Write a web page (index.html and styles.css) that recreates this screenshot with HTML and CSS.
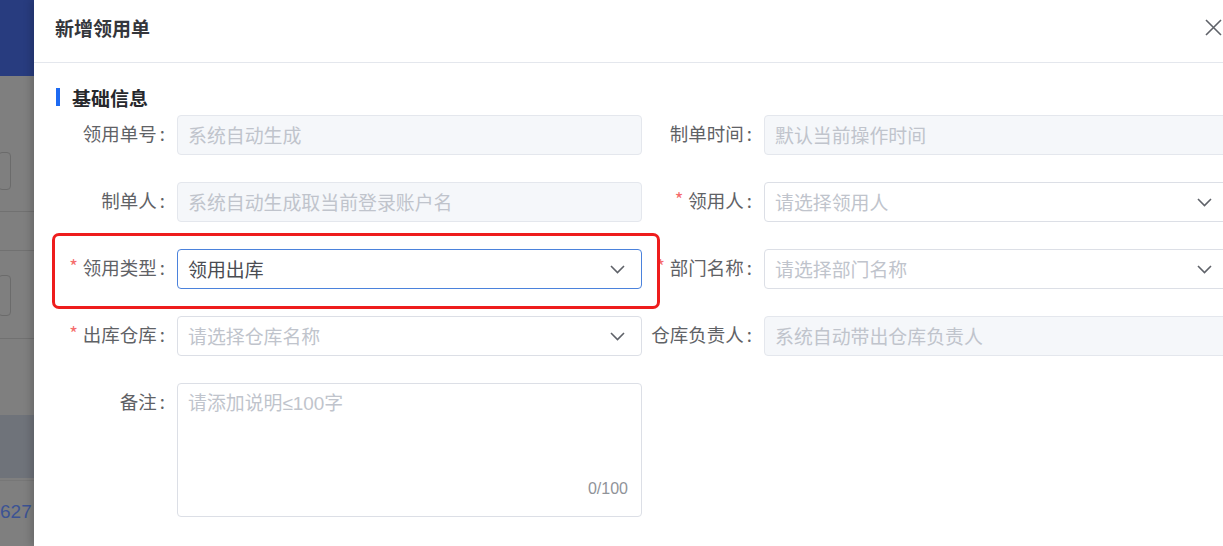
FILE: index.html
```html
<!DOCTYPE html>
<html lang="zh-CN">
<head>
<meta charset="utf-8">
<title>新增领用单</title>
<link rel="stylesheet" href="styles.css">
</head>
<body>
  <div class="backdrop">
    <div class="bd-header"></div>
    <div class="bd-input bd-input-1"></div>
    <div class="bd-line bd-line-1"></div>
    <div class="bd-line bd-line-2"></div>
    <div class="bd-input bd-input-2"></div>
    <div class="bd-line bd-line-3"></div>
    <div class="bd-band"></div>
    <div class="bd-line bd-line-4"></div>
    <div class="bd-text">627</div>
  </div>

  <div class="drawer">
    <div class="drawer-header">
      <div class="drawer-title">新增领用单</div>
      <svg class="close" width="17" height="17" viewBox="0 0 17 17">
        <path d="M1 1 L16 16 M16 1 L1 16" stroke="#5f6269" stroke-width="1.6" fill="none"/>
      </svg>
    </div>
    <div class="drawer-body">
      <div class="section-title"><span class="bar"></span><span>基础信息</span></div>
      <div class="form">
        <div class="item">
          <label class="label">领用单号<span class="colon">:</span></label>
          <div class="input is-disabled"><span class="text">系统自动生成</span></div>
        </div>
        <div class="item">
          <label class="label">制单时间<span class="colon">:</span></label>
          <div class="input is-disabled"><span class="text">默认当前操作时间</span></div>
        </div>

        <div class="item">
          <label class="label">制单人<span class="colon">:</span></label>
          <div class="input is-disabled"><span class="text">系统自动生成取当前登录账户名</span></div>
        </div>
        <div class="item">
          <label class="label"><span class="req">*</span>领用人<span class="colon">:</span></label>
          <div class="input"><span class="text placeholder">请选择领用人</span><svg class="arrow" width="15" height="9" viewBox="0 0 15 9"><path d="M1 1 L7.5 7.5 L14 1" stroke="#5f6269" stroke-width="1.6" fill="none"/></svg></div>
        </div>

        <div class="item">
          <label class="label"><span class="req">*</span>领用类型<span class="colon">:</span></label>
          <div class="input is-focus"><span class="text">领用出库</span><svg class="arrow" width="15" height="9" viewBox="0 0 15 9"><path d="M1 1 L7.5 7.5 L14 1" stroke="#5f6269" stroke-width="1.6" fill="none"/></svg></div>
        </div>
        <div class="item">
          <label class="label"><span class="req">*</span>部门名称<span class="colon">:</span></label>
          <div class="input"><span class="text placeholder">请选择部门名称</span><svg class="arrow" width="15" height="9" viewBox="0 0 15 9"><path d="M1 1 L7.5 7.5 L14 1" stroke="#5f6269" stroke-width="1.6" fill="none"/></svg></div>
        </div>

        <div class="item">
          <label class="label"><span class="req">*</span>出库仓库<span class="colon">:</span></label>
          <div class="input"><span class="text placeholder">请选择仓库名称</span><svg class="arrow" width="15" height="9" viewBox="0 0 15 9"><path d="M1 1 L7.5 7.5 L14 1" stroke="#5f6269" stroke-width="1.6" fill="none"/></svg></div>
        </div>
        <div class="item">
          <label class="label">仓库负责人<span class="colon">:</span></label>
          <div class="input is-disabled"><span class="text">系统自动带出仓库负责人</span></div>
        </div>

        <div class="item">
          <label class="label">备注<span class="colon">:</span></label>
          <div class="textarea">
            <span class="placeholder">请添加说明<span class="latin">≤100</span>字</span>
            <span class="count">0/100</span>
          </div>
        </div>
        <div class="item"></div>
      </div>
    </div>
  </div>

  <div class="annotation"></div>
</body>
</html>
```

FILE: styles.css
```css
* {
  box-sizing: border-box;
}

html, body {
  margin: 0;
  padding: 0;
}

body {
  width: 1223px;
  height: 546px;
  overflow: hidden;
  display: flex;
  position: relative;
  font-family: "Noto Sans CJK SC", "Noto Sans", "Liberation Sans", sans-serif;
  background: #7e7e7e;
}

/* masked page behind the drawer */
.backdrop {
  width: 34px;
  flex: none;
  height: 546px;
  overflow: hidden;
  background: #7f7f7f;
}

.bd-header {
  height: 76px;
  background: #283c7f;
}

.bd-input {
  width: 13px;
  margin-left: -2px;
  border: 1px solid #6b6b6b;
  border-radius: 4px;
}

.bd-input-1 {
  margin-top: 76px;
  height: 38px;
}

.bd-input-2 {
  margin-top: 24px;
  height: 41px;
}

.bd-line {
  height: 1px;
  background: #717171;
}

.bd-line-1 {
  margin-top: 21px;
}

.bd-line-2 {
  margin-top: 38px;
}

.bd-line-3 {
  margin-top: 22px;
}

.bd-band {
  margin-top: 76px;
  height: 63px;
  background: #6f737a;
}

.bd-line-4 {
  margin-top: 2px;
  background: #777;
}

.bd-text {
  margin-top: 20px;
  font-family: "Liberation Sans", sans-serif;
  font-size: 19px;
  line-height: 22px;
  color: #3c5394;
  white-space: nowrap;
}

/* drawer */
.drawer {
  flex: 1;
  min-width: 0;
  height: 546px;
  background: #fff;
  overflow: hidden;
  box-shadow: -3px 0 8px rgba(0, 0, 0, 0.18);
}

.drawer-header {
  height: 63px;
  border-bottom: 1px solid #e4e7ed;
  display: flex;
  justify-content: space-between;
  align-items: flex-start;
  padding: 17px 1px 0 21px;
}

.drawer-title {
  font-size: 19px;
  line-height: 22px;
  font-weight: 700;
  color: #34363b;
}

.close {
  margin-top: 2px;
}

.drawer-body {
  padding: 22px 0 0 21px;
}

.section-title {
  display: flex;
  align-items: center;
  height: 24px;
  font-size: 19px;
  font-weight: 700;
  color: #26282c;
}

.bar {
  width: 4px;
  height: 18px;
  margin-left: 1px;
  margin-right: 12px;
  background: #1d6af2;
}

.form {
  margin-top: 6px;
  width: 1174px;
  display: grid;
  grid-template-columns: 587px 587px;
  row-gap: 27px;
}

.item {
  display: flex;
  align-items: flex-start;
}

.label {
  width: 122px;
  flex: none;
  text-align: right;
  padding-right: 12px;
  line-height: 37px;
  font-size: 18.5px;
  color: #5f6266;
  white-space: nowrap;
}

.colon {
  margin-left: 3px;
}

.req {
  color: #f56c6c;
  margin-right: 5px;
  position: relative;
  top: -1px;
}

.input {
  width: 465px;
  flex: none;
  height: 40px;
  border: 1px solid #dcdfe6;
  border-radius: 4px;
  padding: 0 16px 0 10px;
  display: flex;
  align-items: center;
  font-size: 18.9px;
  color: #606266;
  background: #fff;
}

.input .text {
  flex: 1;
  white-space: nowrap;
  position: relative;
  top: -1px;
}

.input.is-disabled {
  background: #f5f7fa;
  border-color: #e4e7ed;
  color: #c0c4cc;
}

.input.is-focus {
  border-color: #4b82dc;
  color: #4a4c52;
}

.placeholder {
  color: #c0c4cc;
}

.latin {
  font-family: "Liberation Sans", sans-serif;
}

.arrow {
  flex: none;
}

.textarea {
  width: 465px;
  flex: none;
  height: 134px;
  border: 1px solid #dcdfe6;
  border-radius: 4px;
  padding: 5px 13px 17px 10px;
  display: flex;
  flex-direction: column;
  justify-content: space-between;
  font-size: 18.9px;
  line-height: 26px;
}

.count {
  align-self: flex-end;
  font-family: "Liberation Sans", sans-serif;
  font-size: 16px;
  line-height: 20px;
  color: #909399;
}

/* red highlight annotation drawn over the screenshot */
.annotation {
  position: absolute;
  left: 52px;
  top: 233px;
  width: 608px;
  height: 76px;
  border: 3px solid #ee1d1d;
  border-radius: 7px;
  pointer-events: none;
}
```
